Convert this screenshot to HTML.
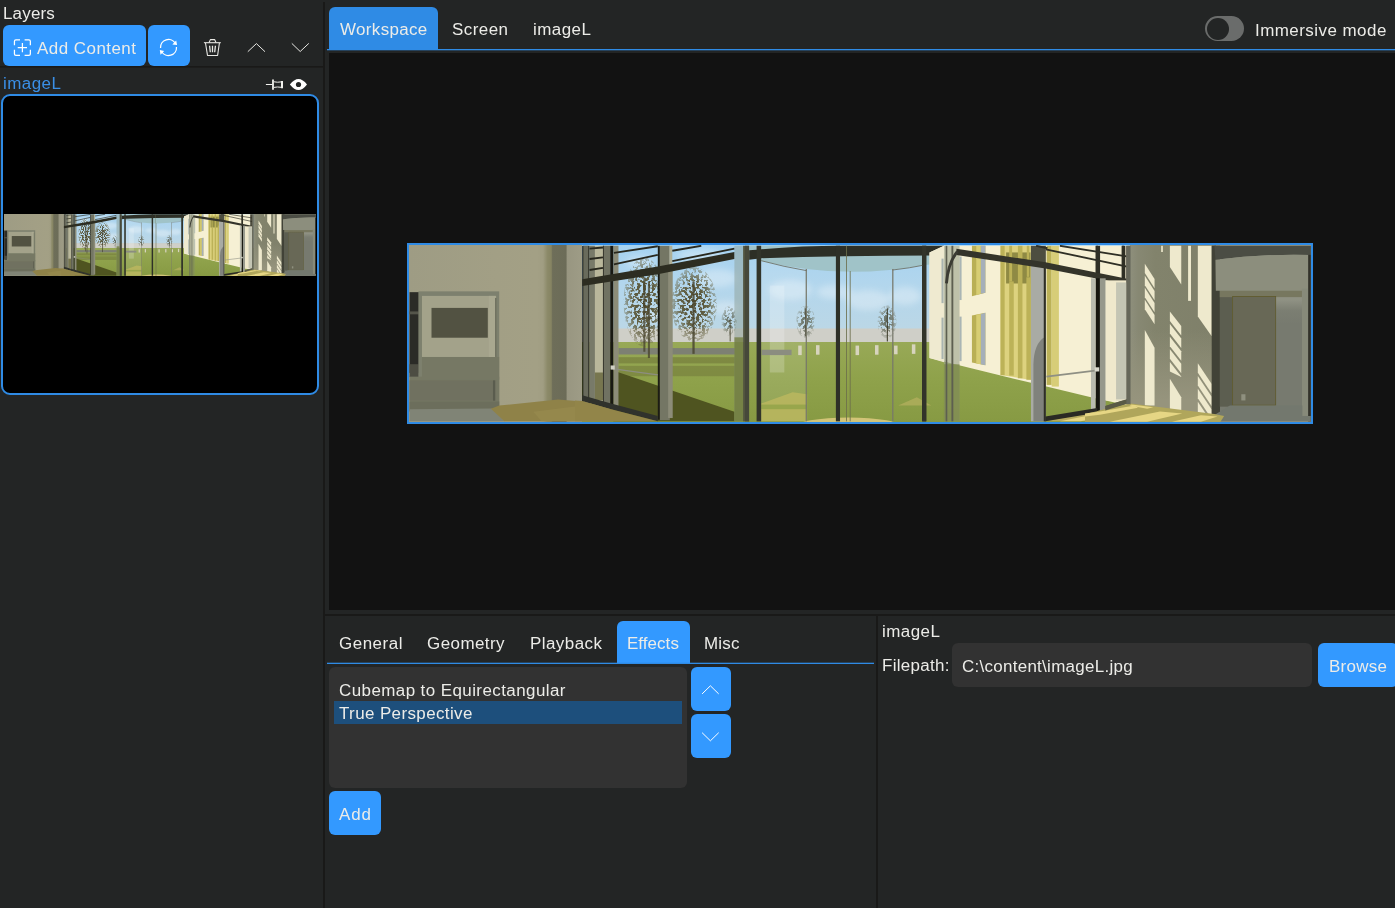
<!DOCTYPE html>
<html><head><meta charset="utf-8"><title>Layers</title>
<style>
html,body{margin:0;padding:0;}
body{width:1395px;height:908px;overflow:hidden;background:#232525;position:relative;font-family:"Liberation Sans",sans-serif;color:#ecece8;}
.a{position:absolute;}
.t{position:absolute;white-space:pre;line-height:1;font-size:16px;will-change:transform;transform:scaleX(1.06);transform-origin:0 0;}
.btn{position:absolute;background:#3399ff;border-radius:6px;}
.blue{color:#3a8fe6;}
svg{position:absolute;overflow:visible;}
</style></head><body>
<!--PANO--><svg width="0" height="0" style="position:absolute">
<defs>
<linearGradient id="gWall" x1="409" x2="582" y1="0" y2="0" gradientUnits="userSpaceOnUse">
<stop offset="0" stop-color="#9e9c84"/><stop offset=".5" stop-color="#a29f85"/><stop offset=".74" stop-color="#a3a085"/><stop offset=".775" stop-color="#a09d82"/><stop offset=".80" stop-color="#8c8a69"/><stop offset=".822" stop-color="#868462"/><stop offset=".83" stop-color="#6e6e59"/><stop offset=".908" stop-color="#6c6c58"/><stop offset=".914" stop-color="#989681"/><stop offset="1" stop-color="#9e9c86"/>
</linearGradient>
<linearGradient id="gSky" x1="0" x2="0" y1="245" y2="330" gradientUnits="userSpaceOnUse">
<stop offset="0" stop-color="#a5d2f0"/><stop offset=".45" stop-color="#b2d6ed"/><stop offset="1" stop-color="#bbd7e6"/>
</linearGradient>
<linearGradient id="gGrass" x1="0" x2="0" y1="342" y2="422" gradientUnits="userSpaceOnUse">
<stop offset="0" stop-color="#98a957"/><stop offset=".45" stop-color="#8fa24b"/><stop offset="1" stop-color="#879a43"/>
</linearGradient>
<linearGradient id="gRWall" x1="1130" x2="1215" y1="0" y2="0" gradientUnits="userSpaceOnUse">
<stop offset="0" stop-color="#8e8f7c"/><stop offset=".1" stop-color="#878873"/><stop offset=".3" stop-color="#82836c"/><stop offset="1" stop-color="#7f806a"/>
</linearGradient>
<filter id="fTree" x="-20%" y="-20%" width="140%" height="140%">
<feTurbulence type="fractalNoise" baseFrequency="0.07" numOctaves="2" seed="4" result="n"/>
<feColorMatrix in="n" type="matrix" values="0 0 0 0 0  0 0 0 0 0  0 0 0 0 0  0 0 0 10 -4.6" result="m"/>
<feComposite in="SourceGraphic" in2="m" operator="in"/>
</filter>
<radialGradient id="gTree"><stop offset="0" stop-color="#4f4a2e" stop-opacity="1"/><stop offset=".6" stop-color="#5b5636" stop-opacity=".9"/><stop offset="1" stop-color="#6a6644" stop-opacity=".35"/></radialGradient>
<filter id="fBlur" x="-30%" y="-30%" width="160%" height="160%"><feGaussianBlur stdDeviation="3"/></filter>
<linearGradient id="gRecess" x1="0" x2="0" y1="290" y2="406" gradientUnits="userSpaceOnUse"><stop offset="0" stop-color="#8f9183"/><stop offset=".45" stop-color="#7b7e72"/><stop offset="1" stop-color="#777a6f"/></linearGradient>
<linearGradient id="gDoor" x1="1232" x2="1276" y1="0" y2="0" gradientUnits="userSpaceOnUse"><stop offset="0" stop-color="#686856"/><stop offset=".4" stop-color="#757763"/><stop offset="1" stop-color="#7b7d69"/></linearGradient>
<linearGradient id="gSoffSh" x1="0" x2="0" y1="288" y2="297" gradientUnits="userSpaceOnUse"><stop offset="0" stop-color="#77775f"/><stop offset="1" stop-color="#646452"/></linearGradient>
<linearGradient id="gRWallV" x1="0" x2="0" y1="330" y2="400" gradientUnits="userSpaceOnUse"><stop offset="0" stop-color="#96947d" stop-opacity="0"/><stop offset="1" stop-color="#96947d" stop-opacity="1"/></linearGradient>
<radialGradient id="gTree2"><stop offset="0" stop-color="#555a4a" stop-opacity=".9"/><stop offset=".6" stop-color="#646a5a" stop-opacity=".7"/><stop offset="1" stop-color="#7a8070" stop-opacity=".25"/></radialGradient>
<symbol id="pano" viewBox="409 245 902 177" preserveAspectRatio="none">
<rect x="409" y="245" width="902" height="177" fill="#a19d84"/>
<!-- outdoor backdrop -->
<rect x="582" y="245" width="550" height="85" fill="url(#gSky)"/>
<rect x="582" y="328.5" width="550" height="14.3" fill="#cfcfc8"/>
<rect x="582" y="342" width="550" height="80" fill="url(#gGrass)"/>
<g fill="#fff" opacity=".3" filter="url(#fBlur)"><ellipse cx="717" cy="278" rx="20" ry="9"/><ellipse cx="700" cy="255" rx="22" ry="6"/><ellipse cx="726" cy="308" rx="14" ry="7"/><ellipse cx="640" cy="262" rx="14" ry="6"/><ellipse cx="790" cy="290" rx="22" ry="10"/><ellipse cx="835" cy="292" rx="18" ry="7"/><ellipse cx="868" cy="300" rx="22" ry="10"/><ellipse cx="905" cy="296" rx="16" ry="9"/><ellipse cx="655" cy="315" rx="12" ry="5"/></g>
<!-- left wall -->
<rect x="409" y="245" width="173" height="177" fill="url(#gWall)"/>
<!--S1-->
<g transform="translate(405,240) scale(0.207021)">
<rect x="22" y="252" width="45" height="390" fill="#2b2b27"/>
<rect x="22" y="345" width="45" height="14" fill="#55554b"/><rect x="22" y="600" width="45" height="62" fill="#4d4d43"/>
<rect x="65" y="248" width="390" height="560" fill="#7d806e"/>
<rect x="22" y="660" width="433" height="170" fill="#767864"/><rect x="82" y="565" width="373" height="110" fill="#767864"/>
<rect x="82" y="270" width="358" height="295" fill="#a3a28a"/>
<rect x="405" y="270" width="33" height="295" fill="#a9a890"/><rect x="436" y="280" width="5" height="285" fill="#5f6153"/>
<rect x="128" y="328" width="272" height="144" fill="#525242"/>
<rect x="22" y="678" width="418" height="98" fill="#707160"/><rect x="425" y="678" width="10" height="98" fill="#5a5c4e"/>
<rect x="22" y="780" width="433" height="45" fill="#6c6e5c"/>
<polygon points="22,818 420,814 482,876 22,876" fill="#808476"/>
<polygon points="415,815 455,800 740,770 855,780 1000,810 1111,840 1111,876 480,876" fill="#8f8248"/>
<polygon points="620,830 860,800 1000,830 920,876 660,876" fill="#9a8c50" opacity=".6"/>
</g>
<!--S2-->
<g transform="translate(575,240) scale(0.207021)">
<!-- path & shadows in grass -->
<rect x="210" y="522" width="562" height="31" fill="#7d8073"/>
<rect x="210" y="566" width="562" height="30" fill="#6e7337" opacity=".55"/>
<rect x="210" y="608" width="562" height="50" fill="#6e7337" opacity=".5"/>
<polygon points="185,630 770,830 770,876 185,876" fill="#4f5420"/>
<!-- trees -->
<ellipse cx="335" cy="300" rx="100" ry="215" fill="url(#gTree)" filter="url(#fTree)"/>
<rect x="330" y="180" width="10" height="360" fill="#4a4630" opacity=".8"/>
<rect x="352" y="200" width="10" height="370" fill="#4a4630" opacity=".8"/>
<ellipse cx="575" cy="310" rx="110" ry="180" fill="url(#gTree)" filter="url(#fTree)"/>
<rect x="567" y="200" width="11" height="350" fill="#4a4630" opacity=".85"/>
<ellipse cx="745" cy="390" rx="38" ry="72" fill="url(#gTree2)" filter="url(#fTree)"/>
<rect x="747" y="380" width="5" height="110" fill="#4a4630" opacity=".8"/>
<!-- wall panel behind left glass -->
<rect x="70" y="28" width="100" height="750" fill="#b9b79b"/>
<rect x="95" y="640" width="40" height="135" fill="#77764f"/>
<!-- frames -->
<rect x="35" y="28" width="35" height="770" fill="#14140e"/><rect x="40" y="28" width="25" height="770" fill="#696b5c"/>
<rect x="70" y="28" width="26" height="752" fill="#787a69"/>
<rect x="135" y="28" width="35" height="780" fill="#707262"/><rect x="135" y="28" width="5" height="780" fill="#3a3a30"/>
<rect x="170" y="28" width="16" height="790" fill="#191912"/>
<rect x="186" y="28" width="24" height="782" fill="#8c8c78"/>
<rect x="400" y="28" width="10" height="840" fill="#1c1c14"/>
<rect x="410" y="28" width="48" height="842" fill="#747664"/>
<rect x="450" y="140" width="22" height="720" fill="#8c8c78"/><rect x="456" y="28" width="14" height="100" fill="#afaf96"/>
<!-- louvres -->
<g stroke="#28281e" stroke-width="9" fill="none">
<path d="M70,42 L135,36 M70,92 L135,84 M70,145 L135,135"/>
<path d="M188,62 L400,30 M188,118 L400,72"/>
<path d="M470,52 L610,28 M470,102 L770,42"/>
</g>
<polygon points="35,190 400,128 770,58 770,92 400,166 35,222" fill="#2d2d21"/>
<!-- door bottom / handle -->
<polygon points="35,750 170,788 400,850 400,876 170,816 35,778" fill="#30322c"/>
<polygon points="0,775 35,778 170,816 400,876 0,876" fill="#928549"/>
<path d="M186,622 L400,652" stroke="#8d8e80" stroke-width="6"/><rect x="172" y="606" width="20" height="20" fill="#d0d0c4"/>
<!-- curved glass edge -->
<rect x="770" y="28" width="42" height="848" fill="#8ea097" opacity=".5"/>
<rect x="770" y="470" width="42" height="406" fill="#6c7635" opacity=".7"/>
<rect x="812" y="28" width="28" height="848" fill="#52543f"/>
</g>
<!--S3-->
<g transform="translate(745,240) scale(0.207021)">
<rect x="78" y="100" width="217" height="776" fill="#fff" opacity=".1"/><rect x="120" y="220" width="70" height="420" fill="#fff" opacity=".2"/>
<rect x="80" y="530" width="145" height="26" fill="#8b8d80"/>
<!-- bollards -->
<g fill="#d7d4be"><rect x="257" y="510" width="17" height="46"/><rect x="343" y="508" width="17" height="46"/><rect x="534" y="510" width="17" height="46"/><rect x="628" y="508" width="17" height="46"/><rect x="720" y="510" width="17" height="42"/><rect x="806" y="504" width="17" height="46"/></g>
<ellipse cx="293" cy="395" rx="46" ry="78" fill="url(#gTree2)" filter="url(#fTree)"/>
<rect x="291" y="330" width="5" height="135" fill="#3d3a28"/>
<ellipse cx="686" cy="395" rx="46" ry="80" fill="url(#gTree2)" filter="url(#fTree)"/>
<rect x="685" y="330" width="5" height="160" fill="#3d3a28"/>
<!-- floor reflections -->
<polygon points="78,790 230,735 300,745 300,876 78,876" fill="#bdb85f" opacity=".8"/><rect x="78" y="795" width="222" height="22" fill="#8ca046" opacity=".7"/>
<ellipse cx="500" cy="905" rx="260" ry="48" fill="#d2c478"/>
<polygon points="740,800 830,760 900,800" fill="#b7b060" opacity=".7"/>
<!-- canopy -->
<path d="M20,28 H960 V110 Q900,118 860,122 Q470,195 78,100 L20,85 Z" fill="#a0c3c8"/>
<path d="M20,50 Q250,28 470,28 H960 V75 Q500,74 78,88 L20,95 Z" fill="#2d2f26"/>
<!-- mullions -->
<rect x="0" y="28" width="20" height="848" fill="#46483a"/>
<rect x="56" y="28" width="22" height="848" fill="#32342a"/>
<rect x="439" y="28" width="20" height="848" fill="#2e3027"/>
<rect x="855" y="28" width="20" height="848" fill="#32342a"/>
<rect x="293" y="140" width="6" height="736" fill="#77786a"/>
<rect x="711" y="140" width="6" height="736" fill="#77786a"/>
<rect x="488" y="28" width="4" height="848" fill="#6c6e4c"/>
<rect x="506" y="150" width="4" height="726" fill="#6c6e4c"/>
<path d="M78,100 Q190,130 297,148 M713,145 Q800,135 860,122" stroke="#6a6b5e" stroke-width="4" fill="none"/>
</g>
<!--S4-->
<g transform="translate(915,240) scale(0.207021)">
<polygon points="70,60 140,28 1030,28 1030,800 850,760 560,690 70,570" fill="#f6f0d4"/>
<polygon points="70,60 140,28 140,590 70,570" fill="#efead0"/>
<!-- building windows -->
<rect x="128" y="90" width="10" height="215" fill="#a9b4b0"/><rect x="128" y="375" width="10" height="200" fill="#a9b4b0"/>
<rect x="215" y="80" width="10" height="210" fill="#aab5b4"/><rect x="215" y="370" width="10" height="215" fill="#aab5b4"/>
<polygon points="275,28 340,28 340,255 275,272" fill="#b9af55"/><polygon points="296,28 318,28 318,260 296,266" fill="#d7cd73"/><polygon points="318,28 340,28 340,255 318,260" fill="#a5afb9"/>
<polygon points="275,365 340,352 340,605 275,592" fill="#b9af55"/><polygon points="296,361 318,358 318,600 296,596" fill="#d7cd73"/><polygon points="318,358 340,352 340,605 318,600" fill="#a5afb9"/>
<!-- slats -->
<polygon points="413,28 560,28 560,676 413,652" fill="#ddd27f"/><rect x="440" y="60" width="118" height="150" fill="#8f8a44"/><g fill="#bcb258"><rect x="413" y="28" width="20" height="625"/><rect x="455" y="200" width="22" height="455"/><rect x="455" y="28" width="14" height="172"/><rect x="497" y="28" width="22" height="640"/><rect x="538" y="180" width="22" height="495"/><rect x="540" y="28" width="12" height="150"/><rect x="636" y="28" width="24" height="672"/></g>
<rect x="660" y="28" width="35" height="680" fill="#d7cd78"/>

<!-- curved glass strip -->
<rect x="140" y="28" width="75" height="848" fill="#9aa18c" opacity=".6"/>
<rect x="140" y="600" width="75" height="276" fill="#78853f" opacity=".6"/>
<rect x="148" y="28" width="8" height="848" fill="#5d5f50"/><rect x="176" y="28" width="9" height="848" fill="#5d5f50"/>
<!-- big gray mullion -->
<rect x="560" y="110" width="72" height="766" fill="#a9aba4"/>
<rect x="560" y="28" width="72" height="90" fill="#4d4e40"/>
<path d="M572,876 V600 Q575,500 625,470 V876 Z" fill="#80827c"/>
<rect x="622" y="110" width="10" height="766" fill="#2e2e26"/>
<!-- louvres top right -->
<g stroke="#2f2f25" stroke-width="9" fill="none"><path d="M585,28 L640,40 M632,45 L1030,130 M700,28 L1030,80 M880,28 V190 M1005,28 V190"/></g>
<rect x="872" y="28" width="22" height="160" fill="#2f2f25"/><rect x="998" y="28" width="18" height="170" fill="#2f2f25"/>
<polygon points="200,42 630,108 1030,188 1030,216 630,138 200,72" fill="#34342a"/>
<path d="M205,55 Q160,110 152,210" stroke="#3b3b33" stroke-width="14" fill="none"/>
<!-- door frame right -->
<rect x="872" y="185" width="22" height="650" fill="#15150f"/>
<rect x="850" y="185" width="22" height="640" fill="#b9bbaf"/><rect x="893" y="185" width="28" height="640" fill="#96988c"/>
<rect x="972" y="210" width="50" height="565" fill="#c4c5b4"/>
<polygon points="920,802 1025,768 1025,790 920,824" fill="#5a5a46"/>
<rect x="1020" y="28" width="20" height="765" fill="#66675a"/>
<!-- floor & bottom frame -->
<polygon points="632,876 880,826 1040,790 1111,800 1111,876" fill="#b5aa5e"/><polygon points="700,876 900,836 1111,800 1111,815 960,845 800,876" fill="#e6d684"/>
<polygon points="630,852 880,812 880,834 630,876" fill="#2a2a24"/>
<path d="M635,660 L880,630" stroke="#8e8f84" stroke-width="8"/><rect x="868" y="615" width="22" height="20" fill="#d8d8cc"/>
<rect x="35" y="28" width="20" height="848" fill="#32342a"/>
</g>
<!--S5-->
<g transform="translate(1085,240) scale(0.207021)">
<rect x="220" y="28" width="420" height="848" fill="none"/>
</g>
<rect x="1130" y="245" width="86" height="177" fill="url(#gRWall)"/><rect x="1130" y="330" width="86" height="92" fill="url(#gRWallV)"/>
<g transform="translate(1085,240) scale(0.207021)">
<g fill="#eee9cd">
<polygon points="289,115 336,188 336,233 289,160"/>
<polygon points="289,173 336,246 336,291 289,218"/>
<polygon points="289,231 336,304 336,349 289,276"/>
<polygon points="289,289 336,362 336,407 289,334"/>
<polygon points="289,435 336,520 336,800 289,800"/>
<polygon points="410,28 465,28 465,215 410,130"/>
<polygon points="410,345 465,415 465,461 410,391"/>
<polygon points="410,406 465,476 465,522 410,452"/>
<polygon points="410,467 465,537 465,583 410,513"/>
<polygon points="410,528 465,598 465,644 410,574"/>
<polygon points="410,589 465,659 465,662 410,635"/>
<polygon points="410,670 465,760 465,832 410,815"/>
<rect x="498" y="28" width="14" height="266"/>
<polygon points="545,28 612,28 612,465 545,370"/>
<polygon points="545,595 612,695 612,741 545,641"/>
<polygon points="545,657 612,757 612,803 545,703"/>
<polygon points="545,719 612,819 612,865 545,765"/>
<polygon points="545,781 612,881 612,927 545,827"/>
<rect x="368" y="28" width="8" height="30"/>
</g>
<!-- alcove -->
<rect x="625" y="28" width="466" height="848" fill="url(#gRecess)"/>
<rect x="612" y="28" width="40" height="848" fill="#414237"/>
<rect x="651" y="245" width="62" height="560" fill="#5c5e50"/><rect x="651" y="232" width="397" height="44" fill="url(#gSoffSh)"/>
<path d="M625,28 H1091 V72 Q850,66 630,95 Z" fill="#4b4d44"/>
<path d="M630,95 Q850,66 1091,72 V235 H1048 V245 H632 Z" fill="#8c8e7d"/>
<rect x="713" y="273" width="208" height="525" fill="url(#gDoor)" stroke="#5f5a2c" stroke-width="4"/>
<rect x="1048" y="235" width="30" height="615" fill="#878a7a"/>
<rect x="1078" y="72" width="13" height="804" fill="#32322a"/>
<polygon points="625,845 700,800 1050,800 1050,850 1091,850 1091,876 625,876" fill="#73786e"/>
<rect x="755" y="745" width="20" height="30" fill="#8f907f"/>
<!-- floor -->
<polygon points="0,840 220,790 625,840 672,850 650,885 0,885" fill="#b0a65b"/><g fill="#e6d684"><polygon points="0,838 72,829 240,800 256,810 72,844 0,853"/><polygon points="120,878 362,829 470,838 300,878"/><polygon points="420,878 560,846 640,852 560,878"/><polygon points="225,795 330,808 300,815 215,800"/></g>
<!-- left frames of S5 -->
<rect x="100" y="195" width="100" height="580" fill="#efe8cc"/>
<rect x="150" y="205" width="50" height="565" fill="#c4c5b4"/>
<polygon points="98,802 205,768 205,790 98,824" fill="#5a5a46"/>
<rect x="200" y="28" width="20" height="765" fill="#66675a"/>
</g>
</symbol>
</defs>
</svg>
<!--/PANO-->


<!-- splitters -->
<div class="a" style="left:323px;top:2px;width:2px;height:906px;background:#191918"></div>
<div class="a" style="left:325px;top:614px;width:1070px;height:2px;background:#191918"></div>
<div class="a" style="left:876px;top:616px;width:2px;height:292px;background:#191918"></div>
<div class="a" style="left:0;top:66px;width:323px;height:1px;background:#191918"></div><div class="a" style="left:0;top:67px;width:323px;height:1px;background:#191918;opacity:.6"></div>

<!-- LEFT PANEL -->
<span class="t" id="t_layers" style="left:3.41px;top:6px;letter-spacing:0.167px;font-size:16px">Layers</span>
<div class="btn" style="left:3px;top:25px;width:143px;height:41px"></div>
<span class="t" id="t_addc" style="left:37.18px;top:41px;letter-spacing:0.442px;font-size:16px">Add Content</span>
<div class="btn" style="left:148px;top:25px;width:42px;height:41px"></div>
<span class="t blue" id="t_img1" style="left:2.56px;top:76px;letter-spacing:0.420px;font-size:16px">imageL</span>
<div class="a" style="left:1px;top:94px;width:314px;height:297px;border:2px solid #2f8be5;border-radius:9px;background:#000"></div>
<svg style="left:4px;top:214px;overflow:hidden" width="312" height="62"><use href="#pano" width="312" height="62"/></svg>

<!-- TOP TABS -->
<div class="a" style="left:329px;top:7px;width:109px;height:42px;background:#2f8be5;border-radius:6px 6px 0 0"></div>
<span class="t" id="t_ws" style="left:339.53px;top:22px;letter-spacing:0.326px;font-size:16px">Workspace</span>
<span class="t" id="t_scr" style="left:452.46px;top:22px;letter-spacing:0.420px;font-size:16px">Screen</span>
<span class="t" id="t_img2" style="left:533.46px;top:22px;letter-spacing:0.420px;font-size:16px">imageL</span>
<div class="a" style="left:327px;top:49px;width:1068px;height:1px;background:#2f8be5"></div>
<div class="a" style="left:327px;top:50px;width:1068px;height:1px;background:#2f8be5;opacity:.3"></div>
<div class="a" style="left:1205px;top:16px;width:39px;height:25px;border-radius:13px;background:#6a6c6b"></div>
<div class="a" style="left:1206.5px;top:17.5px;width:22px;height:22px;border-radius:11px;background:#232525"></div>
<span class="t" id="t_imm" style="left:1255.40px;top:23px;letter-spacing:0.435px;font-size:16px">Immersive mode</span>

<!-- CANVAS -->
<div class="a" style="left:329px;top:53px;width:1066px;height:557px;background:#121212"></div>
<div class="a" style="left:407px;top:243px;width:902px;height:177px;border:2px solid #2f8be5;background:#a19d84"></div>
<svg style="left:409px;top:245px;overflow:hidden" width="902" height="177"><use href="#pano" width="902" height="177"/></svg>

<!-- BOTTOM LEFT -->
<span class="t" id="t_gen" style="left:339.31px;top:636px;letter-spacing:0.492px;font-size:16px">General</span>
<span class="t" id="t_geo" style="left:426.95px;top:636px;letter-spacing:0.420px;font-size:16px">Geometry</span>
<span class="t" id="t_pb" style="left:530.47px;top:636px;letter-spacing:0.420px;font-size:16px">Playback</span>
<div class="a" style="left:617px;top:621px;width:73px;height:42px;background:#3399ff;border-radius:6px 6px 0 0"></div>
<span class="t" id="t_eff" style="left:627.21px;top:636px;letter-spacing:0.052px;font-size:16px">Effects</span>
<span class="t" id="t_misc" style="left:703.81px;top:636px;letter-spacing:0.194px;font-size:16px">Misc</span>
<div class="a" style="left:327px;top:663px;width:547px;height:1px;background:#2f8be5"></div>
<div class="a" style="left:327px;top:662px;width:547px;height:1px;background:#2f8be5;opacity:.3"></div>
<div class="a" style="left:329px;top:667px;width:358px;height:121px;background:#323232;border-radius:6px"></div>
<div class="a" style="left:334px;top:701px;width:348px;height:23px;background:#1d4f7c"></div>
<span class="t" id="t_cube" style="left:339.08px;top:683px;letter-spacing:0.397px;font-size:16px">Cubemap to Equirectangular</span>
<span class="t" id="t_true" style="left:339.10px;top:706px;letter-spacing:0.365px;font-size:16px">True Perspective</span>
<div class="btn" style="left:691px;top:667px;width:40px;height:44px"></div>
<div class="btn" style="left:691px;top:714px;width:40px;height:44px"></div>
<div class="btn" style="left:329px;top:791px;width:52px;height:44px"></div>
<span class="t" id="t_add" style="left:339.44px;top:807px;letter-spacing:0.849px;font-size:16px">Add</span>

<!-- BOTTOM RIGHT -->
<span class="t" id="t_img3" style="left:882.06px;top:624px;letter-spacing:0.420px;font-size:16px">imageL</span>
<span class="t" id="t_fp" style="left:881.91px;top:658px;letter-spacing:0.290px;font-size:16px">Filepath:</span>
<div class="a" style="left:952px;top:643px;width:360px;height:44px;background:#323232;border-radius:6px"></div>
<span class="t" id="t_path" style="left:962.31px;top:659px;letter-spacing:0.265px;font-size:16px">C:\content\imageL.jpg</span>
<div class="btn" style="left:1318px;top:643px;width:80px;height:44px"></div>
<span class="t" id="t_br" style="left:1329.01px;top:659px;letter-spacing:0.243px;font-size:16px">Browse</span>

<!--ICONS-->
<svg style="left:0;top:0" width="1395" height="908" viewBox="0 0 1395 908" fill="none" stroke-linecap="butt">
<!-- add-content icon -->
<g stroke="#fff" stroke-width="1.25">
<path d="M14.45,45.2 V41.2 Q14.45,39.75 15.9,39.75 H20"/>
<path d="M24.6,39.75 H28.9 Q30.35,39.75 30.35,41.2 V45.2"/>
<path d="M14.45,49.8 V53.9 Q14.45,55.35 15.9,55.35 H20"/>
<path d="M24.6,55.35 H28.9 Q30.35,55.35 30.35,53.9 V49.8"/>
<path d="M17.7,47.6 H27 M22.4,43 V52.2"/>
</g>
<!-- refresh -->
<g stroke="#fff" stroke-width="1.25">
<path d="M160.52,48.06 A8,8 0 0 1 175.43,43.5"/>
<path d="M176.48,46.94 A8,8 0 0 1 161.57,51.5"/>
</g>
<g fill="#fff" stroke="none">
<polygon points="176.2,40.4 177.1,45.1 172.3,44.4"/>
<polygon points="159.8,50 164.2,50.9 160.5,54.8"/>
</g>
<!-- trash -->
<g stroke="#e9e9e5" stroke-width="1.1" stroke-linejoin="round">
<path d="M203.9,42.7 H220.8"/>
<path d="M209.1,42.5 L210.4,39.6 H214.6 L216,42.5"/>
<path d="M205.5,43 L207.5,55.5 H217.6 L219.4,43"/>
<path d="M209.6,45.8 L210.3,52.2 M212.5,45.8 V52.2 M215.4,45.8 L214.7,52.2" stroke-width="1.3"/>
</g>
<!-- chevrons -->
<g stroke="#e9e9e5" stroke-width="1">
<path d="M247.8,51.7 L256.4,43.6 L265,51.7"/>
<path d="M291.8,43.4 L300.2,51.5 L308.8,43.4"/>
</g>
<g stroke="#fff" stroke-width="1">
<path d="M702.1,693.9 L710.4,685.8 L718.7,693.9"/>
<path d="M702.1,732.7 L710.4,740.8 L718.7,732.7"/>
</g>
<!-- pin -->
<g stroke="#f2f2ee" stroke-width="1">
<path d="M265.9,84.5 H272.4"/>
<path d="M273,79.4 V89.8" stroke-width="1.8"/>
<path d="M274,81.8 Q277.5,82.6 281,81.9 M274,87.4 Q277.5,86.6 281,87.3"/>
<path d="M282,80.9 V88.2" stroke-width="2"/>
</g>
<!-- eye -->
<path d="M289.9,84.5 Q298.5,73.4 307,84.5 Q298.5,95.6 289.9,84.5 Z" fill="#fff" stroke="none"/>
<circle cx="298.5" cy="84.5" r="2.6" fill="#232525" stroke="none"/>
</svg>
<!--/ICONS-->
</body></html>
